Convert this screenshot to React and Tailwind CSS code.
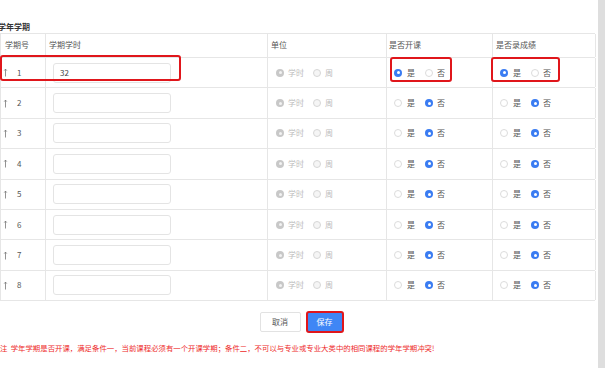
import React from 'react';

const rows = [
    { no: 1, hours: '32', open: true, score: true },
    { no: 2, hours: '', open: false, score: false },
    { no: 3, hours: '', open: false, score: false },
    { no: 4, hours: '', open: false, score: false },
    { no: 5, hours: '', open: false, score: false },
    { no: 6, hours: '', open: false, score: false },
    { no: 7, hours: '', open: false, score: false },
    { no: 8, hours: '', open: false, score: false },
];

const Radio = ({ checked, disabled }) => {
    if (disabled) {
        return checked ? (
            <span className="w-[8px] h-[8px] rounded-full bg-[#c8c8c8] flex items-center justify-center shrink-0">
                <span className="w-[3px] h-[3px] rounded-full bg-[#f2f2f2]"></span>
            </span>
        ) : (
            <span className="w-[8px] h-[8px] rounded-full border border-[#d6d6d6] bg-[#f5f5f5] shrink-0"></span>
        );
    }
    return checked ? (
        <span className="w-[8px] h-[8px] rounded-full bg-[#3a7cf2] flex items-center justify-center shrink-0">
            <span className="w-[3px] h-[3px] rounded-full bg-white"></span>
        </span>
    ) : (
        <span className="w-[8px] h-[8px] rounded-full border border-[#dcdcdc] bg-white shrink-0"></span>
    );
};

const YesNo = ({ yes }) => (
    <div className="flex items-center pl-[7px] text-[8px] text-[#555]">
        <Radio checked={yes} />
        <span className="ml-[5px] mr-[10px]">是</span>
        <Radio checked={!yes} />
        <span className="ml-[4px]">否</span>
    </div>
);

const SortIcon = () => (
    <svg width="5" height="9" viewBox="0 0 5 9" className="shrink-0">
        <path d="M2.5 1 V8.5 M1.2 2.6 L2.5 1.1 L3.8 2.6" stroke="#777" strokeWidth="0.8" fill="none" />
    </svg>
);

const App = () => {
    return (
        <div className="w-[605px] h-[368px] overflow-hidden bg-white flex font-['Noto_Sans_CJK_SC','Noto_Sans',sans-serif]">
            <div className="w-[598px] flex flex-col">
                {/* Title */}
                <div className="pt-[21px] h-[33px] ml-[-2px] text-[8px] font-bold text-[#333] leading-[12px]">学年学期</div>

                {/* Table */}
                <div className="relative w-[595px] border-l border-t border-[#e6e6e6]">
                    <div className="grid grid-cols-[45px_222px_119px_106px_103px] h-[24px] text-[8px] text-[#555] border-b border-[#e6e6e6]">
                        <div className="pl-[4px] pt-[5px] border-r border-[#e6e6e6]">学期号</div>
                        <div className="pl-[3px] pt-[5px] border-r border-[#e6e6e6]">学期学时</div>
                        <div className="pl-[3px] pt-[5px] border-r border-[#e6e6e6]">单位</div>
                        <div className="pl-[2px] pt-[5px] border-r border-[#e6e6e6]">是否开课</div>
                        <div className="pl-[3px] pt-[5px] border-r border-[#e6e6e6]">是否录成绩</div>
                    </div>
                    {rows.map((r) => (
                        <div
                            key={r.no}
                            className="grid grid-cols-[45px_222px_119px_106px_103px] h-[30.4px] border-b border-[#e6e6e6] text-[8px]"
                        >
                            <div className="flex items-center pl-[2px] border-r border-[#e6e6e6] text-[#555]">
                                <SortIcon />
                                <span className="ml-[9px]">{r.no}</span>
                            </div>
                            <div className="flex items-center pl-[7px] border-r border-[#e6e6e6]">
                                <div className="w-[118px] h-[20px] rounded-[3px] border border-[#e4e4e4] flex items-center pl-[6px] text-[#444]">
                                    {r.hours}
                                </div>
                            </div>
                            <div className="flex items-center pl-[8px] border-r border-[#e6e6e6] text-[#bdbdbd]">
                                <Radio checked disabled />
                                <span className="ml-[4px] mr-[9px]">学时</span>
                                <Radio disabled />
                                <span className="ml-[4px]">周</span>
                            </div>
                            <div className="flex items-center border-r border-[#e6e6e6]">
                                <YesNo yes={r.open} />
                            </div>
                            <div className="flex items-center border-r border-[#e6e6e6]">
                                <YesNo yes={r.score} />
                            </div>
                        </div>
                    ))}

                    {/* annotation boxes */}
                    <div className="absolute left-[-1px] top-[21px] w-[181px] h-[26px] border-2 border-[#e0161b] rounded-[3px]"></div>
                    <div className="absolute left-[389px] top-[23px] w-[62px] h-[25px] border-2 border-[#e0161b] rounded-[3px]"></div>
                    <div className="absolute left-[490px] top-[23px] w-[69px] h-[25px] border-2 border-[#e0161b] rounded-[3px]"></div>
                </div>

                {/* Buttons */}
                <div className="flex justify-center gap-[5px] mt-[11px] pl-[5px]">
                    <button className="w-[41px] h-[20px] border border-[#e2e2e2] rounded-[2px] bg-white text-[8px] text-[#555]">取消</button>
                    <button className="w-[38px] h-[22px] mt-[-1px] border-2 border-[#e0161b] rounded-[3px] bg-[#3f86f5] text-[8px] text-white">保存</button>
                </div>

                {/* Note */}
                <div className="mt-[10px] text-[7.4px] text-[#ee2a2a] whitespace-nowrap leading-[10px]">
                    注&nbsp;&nbsp;学年学期是否开课，满足条件一，当前课程必须有一个开课学期；条件二，不可以与专业或专业大类中的相同课程的学年学期冲突!
                </div>
            </div>
            <div className="w-[7px] h-full bg-[#dedede]"></div>
        </div>
    );
};

export default App;
